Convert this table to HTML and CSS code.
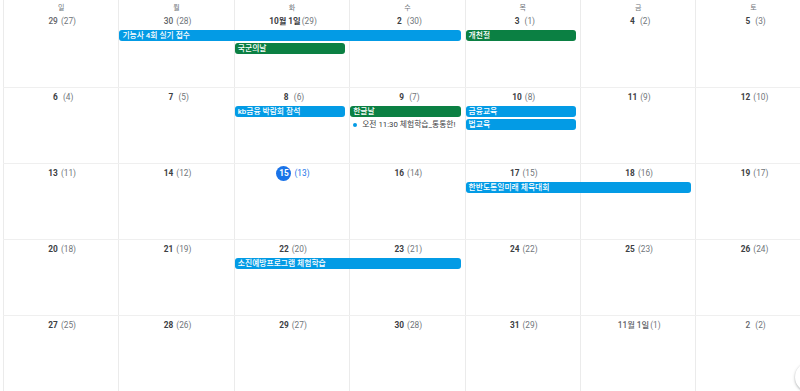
FILE: index.html
```html
<!DOCTYPE html>
<html lang="ko">
<head>
<meta charset="utf-8">
<title>Calendar</title>
<link rel="stylesheet" href="styles.css">
</head>
<body>
<div class="cal">
  <div class="head">
    <div class="dn">일</div><div class="dn">월</div><div class="dn">화</div><div class="dn">수</div><div class="dn">목</div><div class="dn">금</div><div class="dn">토</div>
  </div>

  <div class="week">
    <div class="cell"><div class="date other"><b>29</b> (27)</div></div>
    <div class="cell"><div class="date other"><b>30</b> (28)</div></div>
    <div class="cell"><div class="date"><b>10월 1일</b>(29)</div></div>
    <div class="cell"><div class="date"><b>2</b> (30)</div></div>
    <div class="cell"><div class="date"><b>3</b> (1)</div></div>
    <div class="cell"><div class="date"><b>4</b> (2)</div></div>
    <div class="cell"><div class="date"><b>5</b> (3)</div></div>
    <div class="ev blue" style="grid-column: 2 / span 3; grid-row: 2;">기능사 4회 실기 접수</div>
    <div class="ev green" style="grid-column: 3 / span 1; grid-row: 3;">국군의날</div>
    <div class="ev green" style="grid-column: 5 / span 1; grid-row: 2;">개천절</div>
  </div>

  <div class="week">
    <div class="cell"><div class="date"><b>6</b> (4)</div></div>
    <div class="cell"><div class="date"><b>7</b> (5)</div></div>
    <div class="cell"><div class="date"><b>8</b> (6)</div></div>
    <div class="cell"><div class="date"><b>9</b> (7)</div></div>
    <div class="cell"><div class="date"><b>10</b> (8)</div></div>
    <div class="cell"><div class="date"><b>11</b> (9)</div></div>
    <div class="cell"><div class="date"><b>12</b> (10)</div></div>
    <div class="ev blue" style="grid-column: 3 / span 1; grid-row: 2;">kb금융 박람회 참석</div>
    <div class="ev green" style="grid-column: 4 / span 1; grid-row: 2;">한글날</div>
    <div class="timed" style="grid-column: 4 / span 1; grid-row: 3;"><span class="dot"></span><span class="tt">오전 11:30 체험학습_통통한!</span></div>
    <div class="ev blue" style="grid-column: 5 / span 1; grid-row: 2;">금융교육</div>
    <div class="ev blue" style="grid-column: 5 / span 1; grid-row: 3;">법교육</div>
  </div>

  <div class="week">
    <div class="cell"><div class="date"><b>13</b> (11)</div></div>
    <div class="cell"><div class="date"><b>14</b> (12)</div></div>
    <div class="cell"><div class="date today"><b>15</b> (13)</div></div>
    <div class="cell"><div class="date"><b>16</b> (14)</div></div>
    <div class="cell"><div class="date"><b>17</b> (15)</div></div>
    <div class="cell"><div class="date"><b>18</b> (16)</div></div>
    <div class="cell"><div class="date"><b>19</b> (17)</div></div>
    <div class="ev blue" style="grid-column: 5 / span 2; grid-row: 2;">한반도통일미래 체육대회</div>
  </div>

  <div class="week">
    <div class="cell"><div class="date"><b>20</b> (18)</div></div>
    <div class="cell"><div class="date"><b>21</b> (19)</div></div>
    <div class="cell"><div class="date"><b>22</b> (20)</div></div>
    <div class="cell"><div class="date"><b>23</b> (21)</div></div>
    <div class="cell"><div class="date"><b>24</b> (22)</div></div>
    <div class="cell"><div class="date"><b>25</b> (23)</div></div>
    <div class="cell"><div class="date"><b>26</b> (24)</div></div>
    <div class="ev blue" style="grid-column: 3 / span 2; grid-row: 2;">소진예방프로그램 체험학습</div>
  </div>

  <div class="week">
    <div class="cell"><div class="date"><b>27</b> (25)</div></div>
    <div class="cell"><div class="date"><b>28</b> (26)</div></div>
    <div class="cell"><div class="date"><b>29</b> (27)</div></div>
    <div class="cell"><div class="date"><b>30</b> (28)</div></div>
    <div class="cell"><div class="date"><b>31</b> (29)</div></div>
    <div class="cell"><div class="date other"><b>11월 1일</b>(1)</div></div>
    <div class="cell"><div class="date other"><b>2</b> (2)</div></div>
  </div>
</div>
<div class="fab"></div>
</body>
</html>
```

FILE: styles.css
```css
html, body {
  margin: 0;
  padding: 0;
  background: #ffffff;
  overflow: hidden;
}

body {
  width: 800px;
  height: 391px;
  font-family: Roboto, "Noto Sans CJK KR", sans-serif;
  color: #3c4043;
}

.cal {
  padding-left: 3px;
  width: 808px;
}

.head,
.week {
  display: grid;
  grid-template-columns: repeat(7, 115.4px);
}

.head {
  height: 12px;
}

.dn {
  border-left: 1px solid #ebebeb;
  font-size: 7px;
  line-height: 8px;
  padding-top: 4px;
  text-align: center;
  color: #70757a;
}

.week {
  grid-template-rows: 18px 13px 13px 1fr;
  height: 75px;
  border-bottom: 1px solid #efefef;
}

.cell {
  grid-row: 1 / -1;
  border-left: 1px solid #ebebeb;
}
.cell:nth-child(1) { grid-column: 1; }
.cell:nth-child(2) { grid-column: 2; }
.cell:nth-child(3) { grid-column: 3; }
.cell:nth-child(4) { grid-column: 4; }
.cell:nth-child(5) { grid-column: 5; }
.cell:nth-child(6) { grid-column: 6; }
.cell:nth-child(7) { grid-column: 7; }

.date {
  margin-top: 4px;
  height: 10px;
  line-height: 10px;
  font-size: 8.3px;
  text-align: center;
  color: #70757a;
  padding-left: 2px;
}

.date b {
  display: inline-block;
  min-width: 9px;
  margin-right: 1px;
  text-align: center;
  font-weight: 700;
  color: #3c4043;
}

.date.other b {
  color: #5f6368;
  font-weight: 500;
}
.date.other {
  color: #70757a;
}

.date.today {
  color: #1a73e8;
  margin-top: 2px;
  height: 15px;
  line-height: 15px;
}

.date.today b {
  width: 15px;
  height: 15px;
  min-width: 0;
  border-radius: 50%;
  background: #1a73e8;
  color: #ffffff;
  line-height: 15px;
}

.ev {
  margin: 0 4px 2px 1px;
  height: 11px;
  line-height: 11px;
  border-radius: 3px;
  padding-left: 3px;
  font-size: 7.8px;
  font-weight: 500;
  color: #ffffff;
  white-space: nowrap;
  overflow: hidden;
}

.ev.blue { background: #039be5; }
.ev.green { background: #0b8043; }

.timed {
  display: flex;
  align-items: center;
  margin: 0 6px 2px 2px;
  height: 11px;
  overflow: hidden;
  white-space: nowrap;
}

.dot {
  flex: none;
  width: 4px;
  height: 4px;
  border-radius: 50%;
  background: #039be5;
  margin: 0 5px 0 2px;
}

.tt {
  font-size: 7.8px;
  color: #3c4043;
  line-height: 11px;
}

.fab {
  position: fixed;
  right: -25px;
  bottom: -1px;
  width: 30px;
  height: 30px;
  border-radius: 50%;
  background: #ffffff;
  box-shadow: 0 1px 3px rgba(60, 64, 67, 0.3), 0 1px 2px rgba(60, 64, 67, 0.15);
}
```
